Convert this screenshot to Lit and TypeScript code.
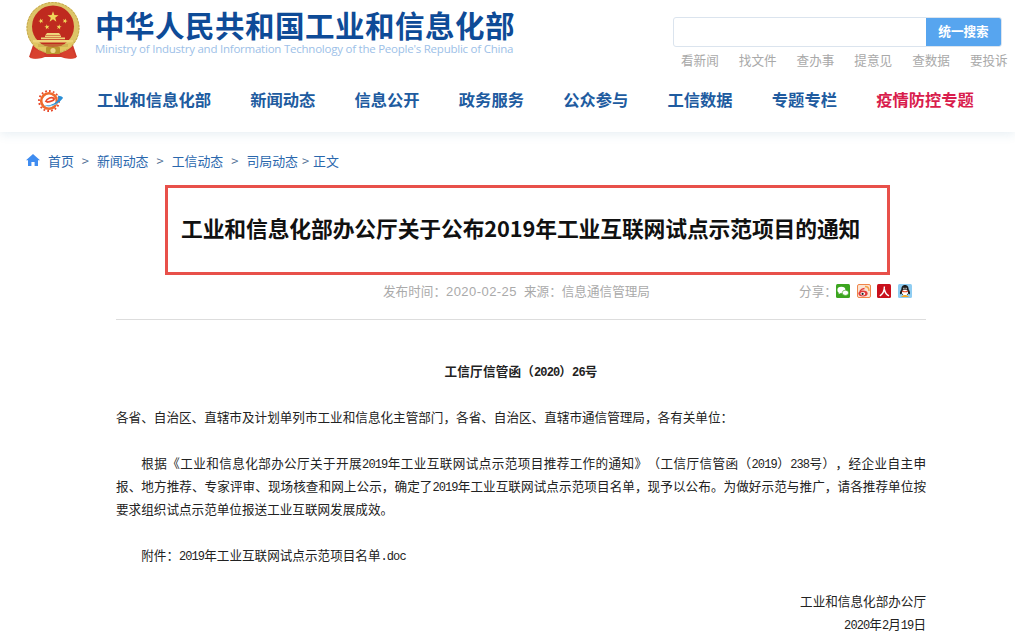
import { LitElement, html, css, svg } from "lit";
import { customElement } from "lit/decorators.js";

const star = (cx: number, cy: number, r: number, rot = 0) => {
  const pts: string[] = [];
  for (let i = 0; i < 10; i++) {
    const a = ((-90 + rot + i * 36) * Math.PI) / 180;
    const rr = i % 2 ? r * 0.4 : r;
    pts.push(`${(cx + rr * Math.cos(a)).toFixed(2)},${(cy + rr * Math.sin(a)).toFixed(2)}`);
  }
  return svg`<polygon points=${pts.join(" ")} fill="#f0d65a"/>`;
};

const emblem = html`<svg class="emblem" viewBox="0 0 54 58" width="54" height="58">
  <path d="M8 40 L3 55 Q11 58 19 55 L35 55 Q43 58 51 55 L46 40 Z" fill="#cf3a2b"/>
  <ellipse cx="27" cy="26" rx="26.5" ry="26" fill="#dcc468"/>
  <ellipse cx="27" cy="26" rx="26" ry="25.5" fill="none" stroke="#c2a548" stroke-width="1" stroke-dasharray="2 1.5"/>
  <ellipse cx="27" cy="24.5" rx="21" ry="21" fill="#bf2a1f"/>
  ${star(27, 15, 5.8)} ${star(15, 19, 2.7, -20)} ${star(39, 19, 2.7, 20)} ${star(21, 25, 2.7, -10)} ${star(33, 25, 2.7, 10)}
  <path d="M21 31 h12 l1.5 2 h-15z M19 33.6 h16 v1.4 h-16z M15 35.6 h24 v1.6 h-24z M7 38 h40 v2.4 h-40z" fill="#eed57a"/>
  <path d="M7 40 Q27 50 47 40 L44 46 Q27 53 10 46 Z" fill="#e2c65f"/>
  <path d="M12 42 H42 V45 H12Z" fill="#c2a548" opacity=".5"/>
  <rect x="20" y="45" width="14" height="7" rx="1" fill="#b9962f"/>
  <circle cx="27" cy="48.5" r="2.6" fill="#ecd98b"/>
  <path d="M8 47 L4 56 Q12 58 19 54 L17 50 Z M46 47 L50 56 Q42 58 35 54 L37 50 Z" fill="#d8412f"/>
</svg>`;

const navLogo = html`<svg class="navlogo" viewBox="0 0 26 22" width="26" height="22">
  <circle cx="11" cy="11" r="7.8" fill="none" stroke="#ee6a2c" stroke-width="2.6"/>
  <circle cx="11" cy="11" r="10" fill="none" stroke="#e8492a" stroke-width="1.8" stroke-dasharray="1.8 2.1"/>
  <path d="M7.5 12 C9 8 14 6.5 16 8.5 C17 10 13 11.5 8.5 12.2" fill="none" stroke="#e8492a" stroke-width="1.7"/>
  <path d="M6 15 C11 18 20 15 25 8 C25 7 23 6 19.5 5.5 C21.5 8 20 11 16 13.5 C12 15.5 9 15.5 6 15Z" fill="#2a8fd6"/>
  <path d="M6 15.5 C11 17.5 17 16 21 12.5 C17 15 12 16 6 15.5Z" fill="#8ed0ee"/>
</svg>`;

const homeIcon = html`<svg class="home" viewBox="0 0 14 12" width="14" height="12">
  <path d="M7 0 L14 6.2 L12 6.2 L12 12 L8.6 12 L8.6 8 L5.4 8 L5.4 12 L2 12 L2 6.2 L0 6.2 Z" fill="#3f8cf0"/>
</svg>`;

const wechat = html`<svg viewBox="0 0 14 14" width="14" height="14">
  <rect width="14" height="14" rx="1.5" fill="#3ca51f"/>
  <ellipse cx="5.4" cy="6" rx="4" ry="3.2" fill="#fff"/><path d="M3 8.2 L2.6 10.2 L5 8.8Z" fill="#fff"/>
  <ellipse cx="9.4" cy="8.8" rx="3.2" ry="2.6" fill="#fff" stroke="#3ca51f" stroke-width=".6"/>
</svg>`;
const weibo = html`<svg viewBox="0 0 14 14" width="14" height="14">
  <rect x=".5" y=".5" width="13" height="13" rx="1.5" fill="#fbe3d2" stroke="#f0854a"/>
  <path d="M8 2.5 Q12 2.5 12 7" fill="none" stroke="#f4a24a" stroke-width="1.5"/>
  <ellipse cx="6" cy="9.5" rx="4.6" ry="3" fill="#e03b3b"/>
  <ellipse cx="5.8" cy="9.8" rx="2.4" ry="1.8" fill="#fff"/><circle cx="5.6" cy="9.9" r="1.1" fill="#222"/>
  <path d="M3 7 Q5 4.5 7.5 4.5" fill="none" stroke="#e03b3b" stroke-width="1.3"/>
</svg>`;
const renren = html`<svg viewBox="0 0 14 14" width="14" height="14">
  <rect width="14" height="14" rx="1.5" fill="#c9101c"/>
  <path d="M7.4 2.5 C7.4 7 6 10 2.8 11.8 M7.4 5.5 C8 8.5 9.5 10.8 12 11.8" fill="none" stroke="#fff" stroke-width="1.4"/>
</svg>`;
const qq = html`<svg viewBox="0 0 14 14" width="14" height="14">
  <rect width="14" height="14" rx="1.5" fill="#8fcdf2"/>
  <path d="M7 1 C4.2 1 3.4 3.3 3.4 5.3 C2 7.4 1.4 9.8 2.5 10.4 L3.8 9.4 L4.2 11 L9.8 11 L10.2 9.4 L11.5 10.4 C12.6 9.8 12 7.4 10.6 5.3 C10.6 3.3 9.8 1 7 1Z" fill="#1c1c1c"/>
  <ellipse cx="7" cy="8.6" rx="3" ry="2.8" fill="#fff"/>
  <path d="M3.8 6.4 Q7 8 10.2 6.4 L10 7.8 Q7 8.9 4 7.8Z" fill="#e5482d"/>
  <path d="M5.4 3.8h1v1.6h-1zM7.6 3.8h1v1.6h-1z" fill="#fff"/>
  <path d="M2.8 13 L6 11 L8 11 L11.2 13Z" fill="#f5a623"/>
</svg>`;

@customElement("app-root")
export class AppRoot extends LitElement {
  static styles = css`
    :host { display: block; width: 1015px; height: 639px; overflow: hidden; background: #fff; font-family: "Noto Sans CJK SC", "Liberation Sans", sans-serif; text-spacing-trim: space-all; }
    * { box-sizing: border-box; }
    header { height: 132px; box-shadow: 0 2px 10px rgba(60,120,160,.13); display: flex; flex-direction: column; }
    .top { display: flex; height: 74px; padding: 2px 0 0 26px; }
    .emblem { flex: none; }
    .brand { margin-left: 15px; width: 425px; padding-top: 5px; }
    .brand h1 { margin: 0; font-size: 29.5px; line-height: 35px; font-weight: 700; color: #0e4b97; letter-spacing: .5px; white-space: nowrap; }
    .brand p { margin: 0; font: 11.5px/14px "Open Sans", sans-serif; color: #9dbfe8; white-space: nowrap; letter-spacing: -.235px; }
    .tools { margin-left: auto; width: 342px; padding-top: 15px; }
    .search { display: flex; width: 329px; height: 30px; border: 1px solid #dbe4ee; border-radius: 3px; overflow: hidden; }
    .search .input { flex: 1; }
    .search .btn { width: 75px; background: #57a5ef; color: #fff; font-size: 12.6px; font-weight: 700; display: flex; align-items: center; justify-content: center; margin: -1px 0; padding-bottom: 3px; }
    .links { display: flex; gap: 20px; padding: 4px 0 0 8px; font-size: 12.6px; line-height: 18px; color: #a9a9a9; white-space: nowrap; }
    nav { display: flex; align-items: center; height: 44px; margin-top: 3px; padding-left: 38px; font-size: 16.3px; font-weight: 700; color: #205b9f; white-space: nowrap; }
    .navlogo { flex: none; margin: 4px 33px 0 0; }
    .items { display: flex; gap: 39.2px; }
    .items .hot { color: #d91d4d; }
    .crumb { display: flex; align-items: center; height: 20px; margin-top: 18px; padding-left: 26px; font-size: 12.9px; color: #2a67ad; white-space: pre; }
    .home { margin-right: 8px; flex: none; }
    .sep { color: #4a6a90; margin: 0 8px; }
    .sep.near { margin: 0 4px; }
    main { margin: 15px 0 0 116px; width: 810px; }
    .title { margin-left: 49px; width: 725px; height: 90px; border: 3px solid #e8504a; display: flex; align-items: center; padding: 0 0 5px 13px; }
    .title h2 { margin: 0; font-size: 21.8px; font-weight: 700; color: #111; white-space: nowrap; letter-spacing: -.13px; }
    .meta { display: flex; align-items: center; height: 20px; margin-top: 6px; padding-left: 267px; font-size: 12.6px; color: #aaa; white-space: pre; }
    .meta .txt { padding-bottom: 2px; }
    .meta .num { font-family: "Liberation Sans", sans-serif; font-size: 13px; letter-spacing: .45px; margin-right: 7px; }
    .share { margin-left: auto; display: flex; align-items: center; padding-right: 14px; gap: 6.67px; }
    .share span { margin-right: -7.47px; padding-bottom: 2px; }
    .share svg { display: block; }
    hr { margin: 18px 0 0; border: 0; border-top: 1px solid #ddd; }
    article { margin-top: 39px; font-size: 12.6px; line-height: 23px; color: #222; }
    article p { margin: 0 0 23px; white-space: nowrap; }
    article .l { font-family: "Liberation Mono", monospace; font-size: 12px; letter-spacing: -.9px; line-height: 0; }
    .center { text-align: center; font-weight: 700; letter-spacing: .2px; }
    .line { display: block; }
    .just { white-space: normal; text-align: justify; text-align-last: justify; text-justify: inter-character; }
    .indent { text-indent: 25.2px; }
    article p.right { text-align: right; margin: 0; }
  `;

  render() {
    const nav = ["工业和信息化部", "新闻动态", "信息公开", "政务服务", "公众参与", "工信数据", "专题专栏"];
    const links = ["看新闻", "找文件", "查办事", "提意见", "查数据", "要投诉"];
    return html`
      <header>
        <div class="top">
          ${emblem}
          <div class="brand">
            <h1>中华人民共和国工业和信息化部</h1>
            <p>Ministry of Industry and Information Technology of the People's Republic of China</p>
          </div>
          <div class="tools">
            <div class="search"><div class="input"></div><div class="btn">统一搜索</div></div>
            <div class="links">${links.map((l) => html`<span>${l}</span>`)}</div>
          </div>
        </div>
        <nav>
          ${navLogo}
          <div class="items">
            ${nav.map((n) => html`<span>${n}</span>`)}
            <span class="hot">疫情防控专题</span>
          </div>
        </nav>
      </header>
      <div class="crumb">${homeIcon}<span>首页<span class="sep">&gt;</span>新闻动态<span class="sep">&gt;</span>工信动态<span class="sep">&gt;</span>司局动态<span class="sep near">&gt;</span>正文</span></div>
      <main>
        <div class="title"><h2>工业和信息化部办公厅关于公布2019年工业互联网试点示范项目的通知</h2></div>
        <div class="meta">
          <span class="txt">发布时间：<span class="num">2020-02-25</span>来源：信息通信管理局</span>
          <div class="share"><span>分享：</span>${wechat}${weibo}${renren}${qq}</div>
        </div>
        <hr />
        <article>
          <p class="center">工信厅信管函（<span class="l">2020</span>）<span class="l">26</span>号</p>
          <p>各省、自治区、直辖市及计划单列市工业和信息化主管部门，各省、自治区、直辖市通信管理局，各有关单位：</p>
          <p>
            <span class="line just indent">根据《工业和信息化部办公厅关于开展<span class="l">2019</span>年工业互联网试点示范项目推荐工作的通知》（工信厅信管函（<span class="l">2019</span>）<span class="l">238</span>号），经企业自主申</span>
            <span class="line just">报、地方推荐、专家评审、现场核查和网上公示，确定了<span class="l">2019</span>年工业互联网试点示范项目名单，现予以公布。为做好示范与推广，请各推荐单位按</span>
            <span class="line">要求组织试点示范单位报送工业互联网发展成效。</span>
          </p>
          <p class="indent">附件：<span class="l">2019</span>年工业互联网试点示范项目名单<span class="l">.doc</span></p>
          <p class="right">工业和信息化部办公厅</p>
          <p class="right"><span class="l">2020</span>年<span class="l">2</span>月<span class="l">19</span>日</p>
        </article>
      </main>
    `;
  }
}
